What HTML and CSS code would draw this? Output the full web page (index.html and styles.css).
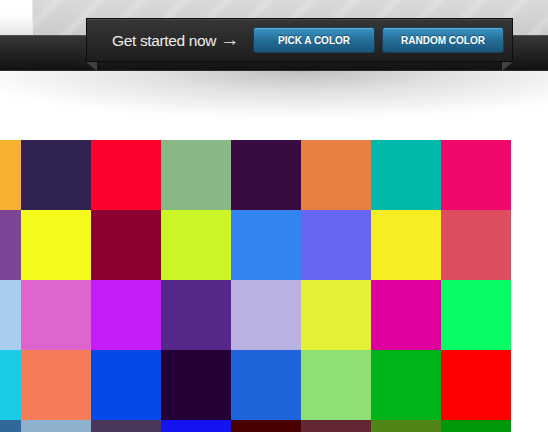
FILE: index.html
```html
<!DOCTYPE html>
<html lang="en">
<head>
<meta charset="utf-8">
<title>Colors</title>
<link rel="stylesheet" href="styles.css">
</head>
<body>
<header class="header">
  <div class="panel"></div>
  <div class="bar"></div>
  <div class="cta">
    <span class="cta-text">Get started now <span class="arrow">&rarr;</span></span>
    <div class="cta-buttons">
      <a class="btn" href="#">Pick a color</a>
      <a class="btn" href="#">Random color</a>
    </div>
  </div>
</header>
<div class="shadow"></div>
<main class="grid">
  <div class="cell" style="background:#f5b22f"></div>
  <div class="cell" style="background:#302352"></div>
  <div class="cell" style="background:#ff002e"></div>
  <div class="cell" style="background:#88b886"></div>
  <div class="cell" style="background:#380b42"></div>
  <div class="cell" style="background:#e88044"></div>
  <div class="cell" style="background:#00b9aa"></div>
  <div class="cell" style="background:#f0096a"></div>

  <div class="cell" style="background:#7c4596"></div>
  <div class="cell" style="background:#f4fa19"></div>
  <div class="cell" style="background:#8a002e"></div>
  <div class="cell" style="background:#ccf527"></div>
  <div class="cell" style="background:#3383f0"></div>
  <div class="cell" style="background:#6865f5"></div>
  <div class="cell" style="background:#f6ee23"></div>
  <div class="cell" style="background:#de4e60"></div>

  <div class="cell" style="background:#a9cdef"></div>
  <div class="cell" style="background:#de65ce"></div>
  <div class="cell" style="background:#c41df8"></div>
  <div class="cell" style="background:#552789"></div>
  <div class="cell" style="background:#b9b1e1"></div>
  <div class="cell" style="background:#e4f033"></div>
  <div class="cell" style="background:#e000a0"></div>
  <div class="cell" style="background:#05fc64"></div>

  <div class="cell" style="background:#18cde5"></div>
  <div class="cell" style="background:#f47c58"></div>
  <div class="cell" style="background:#0549e8"></div>
  <div class="cell" style="background:#250037"></div>
  <div class="cell" style="background:#1e65dc"></div>
  <div class="cell" style="background:#8ee075"></div>
  <div class="cell" style="background:#00b41c"></div>
  <div class="cell" style="background:#ff0000"></div>

  <div class="cell" style="background:#316899"></div>
  <div class="cell" style="background:#8fb1cd"></div>
  <div class="cell" style="background:#4a3659"></div>
  <div class="cell" style="background:#1414f0"></div>
  <div class="cell" style="background:#480000"></div>
  <div class="cell" style="background:#632834"></div>
  <div class="cell" style="background:#518518"></div>
  <div class="cell" style="background:#00980b"></div>
</main>
</body>
</html>
```

FILE: styles.css
```css
html, body {
  margin: 0;
  padding: 0;
  background: #ffffff;
  overflow: hidden;
  font-family: "Liberation Sans", Arial, sans-serif;
}

.header {
  position: relative;
  height: 71px;
  background: linear-gradient(#ffffff 0, #ffffff 14px, #e6e6e6 35px);
}

.panel {
  margin-left: 32px;
  height: 35px;
  background:
    repeating-linear-gradient(135deg,
      rgba(255,255,255,0) 0,
      rgba(255,255,255,0) 12px,
      rgba(255,255,255,0.22) 18px,
      rgba(255,255,255,0) 24px,
      rgba(255,255,255,0) 30px),
    linear-gradient(#dadada, #cbcbcb);
  box-shadow: inset 1px 0 0 #e8e8e8;
}

.bar {
  height: 35px;
  border-top: 1px solid #505050;
  background: linear-gradient(#363636, #101010);
  box-shadow: inset 0 -1px 0 #2a2a2a;
}

.cta {
  position: absolute;
  left: 86px;
  top: 18px;
  height: 42px;
  width: 392px;
  border: 1px solid #0c0c0c;
  background: linear-gradient(#373737, #1d1d1d);
  box-shadow: inset 0 1px 0 #4a4a4a;
  display: flex;
  align-items: center;
  padding: 0 8px 0 25px;
}

.cta::before,
.cta::after {
  content: "";
  position: absolute;
  top: 43px;
  width: 0;
  height: 0;
  border-top: 9px solid #404040;
}

.cta::before {
  left: -1px;
  border-left: 11px solid transparent;
}

.cta::after {
  right: -1px;
  border-right: 11px solid transparent;
}

.cta-text {
  color: #ededed;
  font-size: 15.5px;
  letter-spacing: -0.35px;
  margin-top: -1px;
}

.arrow {
  font-size: 19px;
  line-height: 1;
  letter-spacing: 0;
}

.cta-buttons {
  margin-left: auto;
  display: flex;
  gap: 7px;
}

.btn {
  display: flex;
  align-items: center;
  justify-content: center;
  width: 120px;
  height: 24px;
  border: 1px solid #163f5a;
  border-radius: 3px;
  background: linear-gradient(#3a96c6, #2369922 60%, #1b567a);
  background: linear-gradient(#3a96c6, #236a94 55%, #1b567a);
  box-shadow: inset 0 1px 0 rgba(255,255,255,0.25);
  color: #ffffff;
  font-size: 10px;
  font-weight: bold;
  text-transform: uppercase;
  text-decoration: none;
  text-shadow: 0 -1px 0 rgba(0,0,0,0.35);
}

.shadow {
  height: 69px;
  background: radial-gradient(ellipse 340px 48px at 300px 0, #bfbfbf 0%, #e2e2e2 45%, #ffffff 100%);
}

.grid {
  display: grid;
  grid-template-columns: repeat(8, 70px);
  grid-auto-rows: 70px;
  margin-left: -49px;
  width: 560px;
}
```
